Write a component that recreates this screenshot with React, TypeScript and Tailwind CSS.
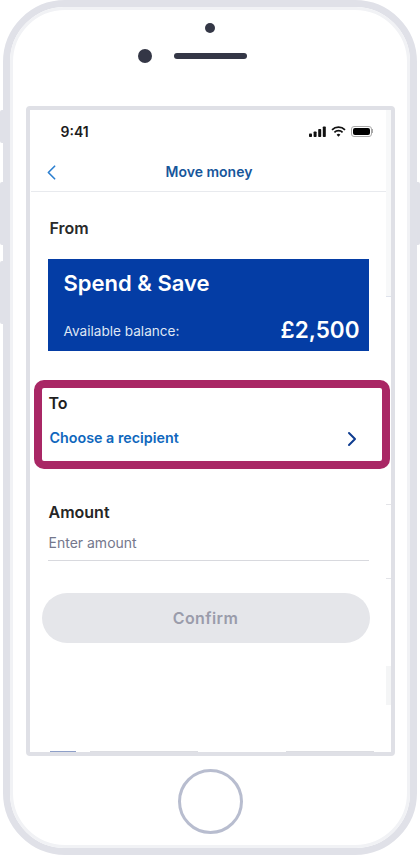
import React from 'react';
import { ChevronLeft, ChevronRight } from 'lucide-react';

const StatusIcons = () => (
  <div className="flex items-center gap-[4px]">
    <svg width="17" height="11" viewBox="0 0 17 11" fill="#111">
      <rect x="0" y="7.5" width="3" height="3.5" rx="0.8" />
      <rect x="4.6" y="5.5" width="3" height="5.5" rx="0.8" />
      <rect x="9.2" y="3" width="3" height="8" rx="0.8" />
      <rect x="13.8" y="0.5" width="3" height="10.5" rx="0.8" />
    </svg>
    <svg width="15" height="11" viewBox="0 0 15 11" fill="none" stroke="#111" strokeWidth="1.7" className="ml-[1px]">
      <path d="M1 3.9a9.2 9.2 0 0 1 13 0" />
      <path d="M3.4 6.3a5.8 5.8 0 0 1 8.2 0" />
      <path d="M7.5 10.8 5.6 8.7a2.7 2.7 0 0 1 3.8 0Z" fill="#111" stroke="none" />
    </svg>
    <div className="ml-[1px] flex items-center">
      <div className="w-[21px] h-[11px] rounded-[3px] border border-[#a9a9a9] p-[1px]">
        <div className="w-full h-full rounded-[2px] bg-black" />
      </div>
      <div className="w-[1px] h-[4px] bg-[#a9a9a9]" />
    </div>
  </div>
);

const Gutter = () => (
  <div className="w-[5px] flex flex-col shrink-0">
    <div className="h-[187px] bg-[#f7f8f9] border-b border-[#dfe3ec]" />
    <div className="h-[208px] border-b border-[#e3e4e8]" />
    <div className="h-[74px] border-b border-[#e3e4e8]" />
    <div className="h-[87px]" />
    <div className="h-[39px] bg-[#f4f5f6]" />
  </div>
);

export default function App() {
  return (
    <div
      className="relative w-[420px] h-[856px] overflow-hidden bg-white"
      style={{ fontFamily: 'Inter, "Liberation Sans", sans-serif' }}
    >
      {/* side buttons */}
      <div className="absolute left-0 top-[110px] w-[4px] h-[33px] rounded-l-[2px] bg-[#e0e1e8]" />
      <div className="absolute left-0 top-[182px] w-[4px] h-[63px] rounded-l-[2px] bg-[#e0e1e8]" />
      <div className="absolute left-0 top-[261px] w-[4px] h-[63px] rounded-l-[2px] bg-[#e0e1e8]" />
      <div className="absolute right-0 top-[182px] w-[4px] h-[63px] rounded-r-[2px] bg-[#e0e1e8]" />

      <div className="relative mx-[3px] h-[855px] rounded-[62px] border-[7px] border-[#e0e1e8] bg-white">
        <div className="h-full rounded-[55px] border-[3px] border-[#f1f2f5] flex flex-col items-center">
          {/* earpiece and camera */}
          <div className="mt-[13px] w-[10px] h-[10px] rounded-full bg-[#343746] shrink-0" />
          <div className="mt-[16px] h-[14px] w-full flex items-center shrink-0 pl-[125px]">
            <div className="w-[14px] h-[14px] rounded-full bg-[#343746]" />
            <div className="ml-[22px] w-[73px] h-[6px] rounded-full bg-[#343746]" />
          </div>

          {/* screen */}
          <div className="mt-[43px] w-[369px] h-[650px] shrink-0 rounded-[4px] border-[4px] border-[#dfe0e6] bg-white overflow-hidden flex">
            <div className="w-[356px] shrink-0 flex flex-col">
              <div className="h-[42px] pl-[31px] pr-[13px] flex items-center justify-between">
                <span className="mt-[1px] text-[14px] font-semibold text-[#1c1c1c]">9:41</span>
                <StatusIcons />
              </div>

              <div className="relative h-[40px] ml-[1px] flex items-center justify-center border-b border-[#e8eaee]">
                <ChevronLeft
                  size={25}
                  strokeWidth={1.6}
                  className="absolute left-[8px] top-[8px] text-[#2b7fd0]"
                />
                <span className="ml-[2px] text-[14px] font-semibold text-[#17569b]">Move money</span>
              </div>

              <div className="mt-[26px] ml-[20px] text-[16px] leading-[20px] font-semibold text-[#2a2a2a]">From</div>

              <div className="mt-[21px] ml-[18px] w-[321px] h-[92px] bg-[#043da5] pl-[16px] pr-[9px] pt-[10px] flex flex-col">
                <div className="text-[22px] leading-[28px] font-semibold text-white">Spend &amp; Save</div>
                <div className="mt-[18px] flex items-center justify-between">
                  <span className="mt-[3px] text-[13.6px] text-[#dfe6f4]">Available balance:</span>
                  <span className="text-[22.5px] leading-[30px] font-semibold text-white">£2,500</span>
                </div>
              </div>

              {/* highlighted recipient row */}
              <div className="relative z-10 mt-[29px] ml-[4px] w-[356px] h-[89px] shrink-0 rounded-[10px] border-[8px] border-[#a92765] bg-white pl-[7px] pr-[24px] flex flex-col">
                <div className="mt-[5px] text-[16px] leading-[20px] font-semibold text-[#1f1f1f]">To</div>
                <div className="mt-[11px] flex items-center justify-between">
                  <span className="ml-[1px] text-[14.3px] leading-[18px] font-semibold text-[#0f67bd]">Choose a recipient</span>
                  <ChevronRight size={24} strokeWidth={2} className="mr-[-6px] mt-[3px] text-[#0f3d90]" />
                </div>
              </div>

              <div className="mt-[33px] ml-[19px] text-[16px] leading-[20px] font-semibold text-[#262626]">Amount</div>
              <div className="mt-[11px] ml-[18px] w-[321px] h-[28px] border-b border-[#d8d9de] pl-[1px] text-[14px] leading-[20px] text-[#74778c]">
                Enter amount
              </div>

              <button className="mt-[32px] ml-[12px] w-[328px] h-[50px] shrink-0 rounded-full bg-[#e5e6ea] text-[16px] font-semibold tracking-[0.4px] text-[#9a9cab]">
                Confirm
              </button>

              {/* top of the list scrolled behind the frame */}
              <div className="mt-auto h-[2px] flex items-end">
                <div className="ml-[20px] w-[26px] h-[1px] bg-[#8e9fc8]" />
                <div className="ml-[14px] w-[108px] h-[1px] bg-[#dcdde2]" />
                <div className="ml-[88px] w-[88px] h-[1px] bg-[#dcdde2]" />
              </div>
            </div>
            <Gutter />
          </div>

          {/* home button */}
          <div className="mt-[13px] w-[65px] h-[65px] rounded-full border-[3.5px] border-[#b8bdcf] shrink-0" />
        </div>
      </div>
    </div>
  );
}
